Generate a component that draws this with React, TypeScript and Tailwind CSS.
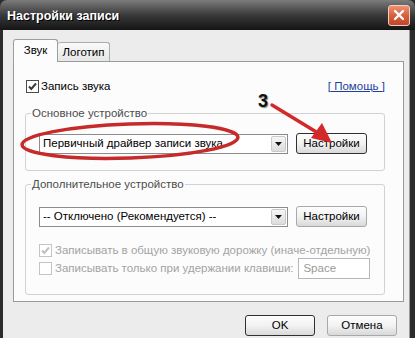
import React from 'react'

function CheckBox({ checked, disabled }: { checked?: boolean; disabled?: boolean }) {
  return (
    <span
      className={`flex h-[13px] w-[13px] shrink-0 items-center justify-center border bg-white ${
        disabled ? 'border-[#c4c4c4]' : 'border-[#4a4a4a]'
      }`}
    >
      {checked && (
        <svg viewBox="0 0 11 11" className="h-[11px] w-[11px]">
          <path
            d="M2 5.5 L4.3 8 L9 2.5"
            fill="none"
            stroke={disabled ? '#c0c0c0' : '#3a3a3a'}
            strokeWidth="2"
          />
        </svg>
      )}
    </span>
  )
}

function Select({ value }: { value: string }) {
  return (
    <div className="flex h-[20px] w-[249px] items-center justify-between border border-[#8c8c8c] bg-white pl-[3px] pr-px">
      <span className="truncate">{value}</span>
      <span className="flex h-[16px] w-[15px] items-center justify-center rounded-[2px] border border-[#c9c9c9] bg-gradient-to-b from-[#f6f6f6] to-[#dcdcdc]">
        <svg viewBox="0 0 7 4" className="h-[4px] w-[7px]">
          <path d="M0 0 H7 L3.5 4 Z" fill="#111" />
        </svg>
      </span>
    </div>
  )
}

function Button({ label, strong, w = 'w-[71px]' }: { label: string; strong?: boolean; w?: string }) {
  return (
    <button
      type="button"
      className={`${w} flex h-[21px] items-center justify-center rounded-[3px] border bg-gradient-to-b from-[#fdfdfd] via-[#f2f2f2] to-[#d9d9d9] text-[11.5px] text-black ${
        strong ? 'border-[#303030]' : 'border-[#a9a9a9]'
      }`}
    >
      {label}
    </button>
  )
}

export default function App() {
  return (
    <div className="relative h-[338px] w-[415px] overflow-hidden bg-[#2c2c2c] font-['Liberation_Sans',Arial,sans-serif] text-[11.5px] leading-[13px] text-black">
      {/* title bar */}
      <div className="flex h-[30px] items-center justify-between rounded-t-[7px] bg-gradient-to-b from-[#7c7c7c] via-[#3a3a3a] to-[#151515] pl-[7px] pr-[5px]">
        <span className="pt-px text-[12.5px] font-bold leading-[18px] text-white [text-shadow:1px_1px_0_#000]">
          Настройки записи
        </span>
        <span className="flex h-[21px] w-[22px] items-center justify-center rounded-[3px] border border-[#f0cfc4] bg-gradient-to-b from-[#ec9272] via-[#d6603e] to-[#c2452a]">
          <svg viewBox="0 0 12 12" className="h-[12px] w-[12px]">
            <path d="M2 2 L10 10 M10 2 L2 10" stroke="#fff" strokeWidth="2.4" strokeLinecap="round" />
          </svg>
        </span>
      </div>

      {/* body */}
      <div className="ml-[3px] mr-[5px] h-[308px] border-r border-[#9a9a9a] bg-[#ececec] pl-[10px] pr-[5px] pt-[9px]">
        {/* tabs */}
        <div className="relative z-10 flex items-end">
          <div className="-mb-px flex h-[23px] w-[45px] items-start justify-center rounded-t-[3px] border border-b-0 border-[#9aa0a0] bg-[#fcfcfc] pt-[4px]">
            Звук
          </div>
          <div className="flex h-[19px] w-[52px] items-start justify-center rounded-t-[3px] border border-b-0 border-l-0 border-[#a8acac] bg-gradient-to-b from-[#fafafa] to-[#e6e6e6] pt-[3px]">
            Логотип
          </div>
        </div>

        {/* panel */}
        <div className="h-[241px] border border-[#9a9a9a] bg-[#fcfcfc] pl-[11px] pr-[18px] pt-[18px]">
          <div className="flex h-[13px] items-center justify-between pl-px">
            <div className="flex items-center gap-[2px]">
              <CheckBox checked />
              <span>Запись звука</span>
            </div>
            <a className="text-[#1c3f9c] underline">[ Помощь ]</a>
          </div>

          <fieldset className="mt-[14px] rounded-[3px] border border-[#d2d2d2]">
            <legend className="ml-[5px] px-px text-[#4c4c4c]">Основное устройство</legend>
            <div className="flex items-center gap-[8px] pb-[16px] pl-[13px] pt-[13px]">
              <Select value="Первичный драйвер записи звука" />
              <Button label="Настройки" strong />
            </div>
          </fieldset>

          <fieldset className="mt-[7px] rounded-[3px] border border-[#d2d2d2]">
            <legend className="ml-[5px] px-px text-[#4c4c4c]">Дополнительное устройство</legend>
            <div className="pb-[15px] pl-[13px] pr-[14px] pt-[15px]">
              <div className="flex items-center gap-[8px]">
                <Select value="-- Отключено (Рекомендуется) --" />
                <Button label="Настройки" />
              </div>
              <div className="mt-[17px] flex h-[13px] items-center gap-[3px] whitespace-nowrap text-[#a3a3a3]">
                <CheckBox checked disabled />
                <span>Записывать в общую звуковую дорожку (иначе-отдельную)</span>
              </div>
              <div className="mt-px flex h-[21px] items-center gap-[3px] whitespace-nowrap text-[#a3a3a3]">
                <CheckBox disabled />
                <span>Записывать только при удержании клавиши:</span>
                <span className="ml-auto flex h-[21px] w-[72px] items-center border border-[#b4b8bc] bg-white pl-[4px] text-[#9a9a9a]">
                  Space
                </span>
              </div>
            </div>
          </fieldset>
        </div>

        {/* dialog buttons */}
        <div className="mr-[7px] mt-[13px] flex justify-end gap-[12px]">
          <Button label="OK" strong w="w-[70px]" />
          <Button label="Отмена" w="w-[70px]" />
        </div>
      </div>

      {/* annotation overlay */}
      <svg className="pointer-events-none absolute left-0 top-0" width="415" height="338" viewBox="0 0 415 338">
        <ellipse
          cx="130"
          cy="141"
          rx="108"
          ry="17"
          transform="rotate(-2 130 141)"
          fill="none"
          stroke="#c62a2a"
          strokeWidth="3.5"
        />
        <line x1="272" y1="105" x2="318" y2="133" stroke="#d22a2a" strokeWidth="3.5" strokeLinecap="round" />
        <polygon points="332,143 311,138 322,123" fill="#d22a2a" />
      </svg>
      <div className="absolute left-[258px] top-[91px] text-[18px] font-bold leading-[20px] text-[#111] [text-shadow:1px_1px_1px_#888]">
        3
      </div>
    </div>
  )
}
